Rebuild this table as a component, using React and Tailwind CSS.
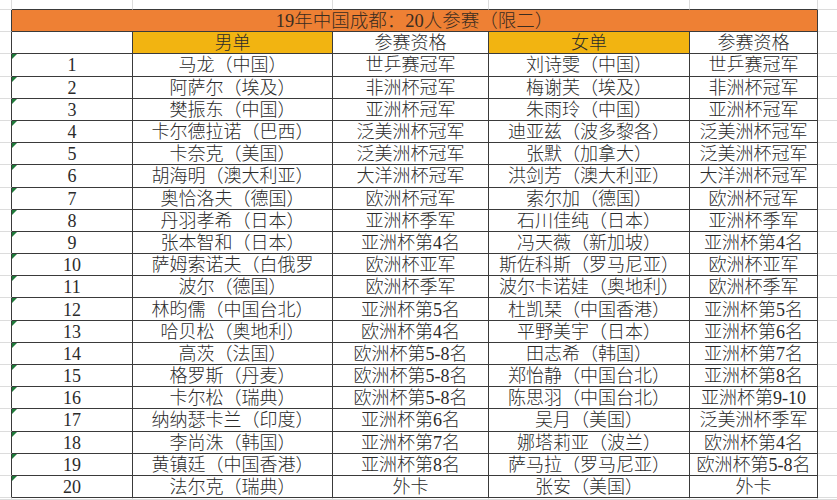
import React from 'react';

const rows = [
  ['1', '马龙（中国）', '世乒赛冠军', '刘诗雯（中国）', '世乒赛冠军'],
  ['2', '阿萨尔（埃及）', '非洲杯冠军', '梅谢芙（埃及）', '非洲杯冠军'],
  ['3', '樊振东（中国）', '亚洲杯冠军', '朱雨玲（中国）', '亚洲杯冠军'],
  ['4', '卡尔德拉诺（巴西）', '泛美洲杯冠军', '迪亚兹（波多黎各）', '泛美洲杯冠军'],
  ['5', '卡奈克（美国）', '泛美洲杯冠军', '张默（加拿大）', '泛美洲杯冠军'],
  ['6', '胡海明（澳大利亚）', '大洋洲杯冠军', '洪剑芳（澳大利亚）', '大洋洲杯冠军'],
  ['7', '奥恰洛夫（德国）', '欧洲杯冠军', '索尔加（德国）', '欧洲杯冠军'],
  ['8', '丹羽孝希（日本）', '亚洲杯季军', '石川佳纯（日本）', '亚洲杯季军'],
  ['9', '张本智和（日本）', '亚洲杯第4名', '冯天薇（新加坡）', '亚洲杯第4名'],
  ['10', '萨姆索诺夫（白俄罗', '欧洲杯亚军', '斯佐科斯（罗马尼亚）', '欧洲杯亚军'],
  ['11', '波尔（德国）', '欧洲杯季军', '波尔卡诺娃（奥地利）', '欧洲杯季军'],
  ['12', '林昀儒（中国台北）', '亚洲杯第5名', '杜凯琹（中国香港）', '亚洲杯第5名'],
  ['13', '哈贝松（奥地利）', '欧洲杯第4名', '平野美宇（日本）', '亚洲杯第6名'],
  ['14', '高茨（法国）', '欧洲杯第5-8名', '田志希（韩国）', '亚洲杯第7名'],
  ['15', '格罗斯（丹麦）', '欧洲杯第5-8名', '郑怡静（中国台北）', '亚洲杯第8名'],
  ['16', '卡尔松（瑞典）', '欧洲杯第5-8名', '陈思羽（中国台北）', '亚洲杯第9-10'],
  ['17', '纳纳瑟卡兰（印度）', '亚洲杯第6名', '吴月（美国）', '泛美洲杯季军'],
  ['18', '李尚洙（韩国）', '亚洲杯第7名', '娜塔莉亚（波兰）', '欧洲杯第4名'],
  ['19', '黄镇廷（中国香港）', '亚洲杯第8名', '萨马拉（罗马尼亚）', '欧洲杯第5-8名'],
  ['20', '法尔克（瑞典）', '外卡', '张安（美国）', '外卡'],
];

const header = ['', '男单', '参赛资格', '女单', '参赛资格'];

// r: 0 top strip, 1 title, 2 header, 3..22 data, 23 bottom strip
// c: 0 left margin, 1..5 table, 6 right strip
function borderClasses(r, c) {
  const inTable = r >= 1 && r <= 22;
  const right = c === 6 ? 'border-r-0' : inTable && c <= 5 ? 'border-r-[#3a3a3a]' : 'border-r-[#dcdcdc]';
  const bottom = c >= 1 && c <= 5 && r <= 22 ? 'border-b-[#3a3a3a]' : 'border-b-[#dcdcdc]';
  return `border-r border-b ${right} ${bottom}`;
}

function Cell({ r, c, children, bg = 'bg-white', flag }) {
  return (
    <div className={`relative flex items-center justify-center overflow-hidden whitespace-nowrap pt-px ${bg} ${borderClasses(r, c)}`}>
      {flag && (
        <span className="absolute left-0 top-0 h-0 w-0 border-t-[5px] border-r-[5px] border-t-[#1f7a3a] border-r-transparent" />
      )}
      {children}
    </div>
  );
}

export default function App() {
  const cells = [];

  // top strip
  for (let c = 0; c < 7; c++) cells.push(<Cell key={`t${c}`} r={0} c={c} />);

  // title row
  cells.push(<Cell key="m1" r={1} c={0} />);
  cells.push(
    <div
      key="title"
      className="col-span-5 flex items-center justify-center pt-px bg-[#ee8034] border-r border-b border-r-[#3a3a3a] border-b-[#3a3a3a] text-[18.5px] text-[#3a2c20]"
    >
      19年中国成都：20人参赛（限二）
    </div>
  );
  cells.push(<Cell key="rt1" r={1} c={6} />);

  // header row
  cells.push(<Cell key="m2" r={2} c={0} />);
  header.forEach((h, i) => {
    const c = i + 1;
    cells.push(
      <Cell key={`h${c}`} r={2} c={c} bg={c === 2 || c === 4 ? 'bg-[#f2b411]' : 'bg-white'}>
        {h}
      </Cell>
    );
  });
  cells.push(<Cell key="rt2" r={2} c={6} />);

  // data
  rows.forEach((row, i) => {
    const r = i + 3;
    cells.push(<Cell key={`m${r}`} r={r} c={0} />);
    row.forEach((v, j) => {
      const c = j + 1;
      cells.push(
        <Cell key={`d${r}-${c}`} r={r} c={c} flag={c === 1}>
          {v}
        </Cell>
      );
    });
    cells.push(<Cell key={`rt${r}`} r={r} c={6} />);
  });

  // bottom strip
  for (let c = 0; c < 7; c++) cells.push(<Cell key={`b${c}`} r={23} c={c} />);

  return (
    <div
      className="grid h-[500px] w-[837px] overflow-hidden bg-white text-[18px] leading-none text-[#2b2b2b] grid-cols-[12px_121px_200px_156px_201px_128px_1fr] grid-rows-[10px_repeat(22,22.2px)_1fr]"
      style={{ fontFamily: '"Liberation Serif", "Noto Sans CJK SC", serif', fontWeight: 300 }}
    >
      {cells}
    </div>
  );
}
